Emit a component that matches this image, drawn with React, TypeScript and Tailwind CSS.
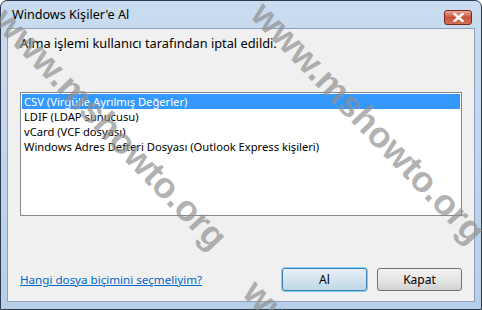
import React from 'react';

const items = [
  'CSV (Virgülle Ayrılmış Değerler)',
  'LDIF (LDAP sunucusu)',
  'vCard (VCF dosyası)',
  'Windows Adres Defteri Dosyası (Outlook Express kişileri)',
];

function Watermark({ className }: { className: string }) {
  return (
    <span
      className={`absolute whitespace-nowrap origin-top-left rotate-[46deg] font-bold text-[36px] leading-[40px] text-[#8f8f8f]/70 pointer-events-none ${className}`}
      style={{ fontFamily: '"Liberation Sans", Arial, sans-serif' }}
    >
      www.mshowto.org
    </span>
  );
}

export default function App() {
  return (
    <div
      className="relative w-[482px] h-[310px] overflow-hidden bg-white text-[12px] text-black"
      style={{ fontFamily: '"Noto Sans", "Open Sans", sans-serif' }}
    >
      <div className="flex flex-col w-full h-full border border-[#2d3b4d] rounded-t-[7px] bg-gradient-to-b from-[#c9dcf0] to-[#b6cfe9]">
        {/* title bar */}
        <div className="flex items-start justify-between h-[27px] pl-[11px] pr-[9px]">
          <span className="pt-[5px] leading-[17px] text-[12.6px]">Windows Kişiler'e Al</span>
          <div className="mt-[9px] w-[28px] h-[15px] rounded-[3px] border border-[#7a2a1c] bg-gradient-to-b from-[#e9a99a] via-[#c9523b] to-[#d0705a] flex items-center justify-center">
            <svg width="11" height="9" viewBox="0 0 11 9">
              <path d="M1.5 1 L9.5 8 M9.5 1 L1.5 8" stroke="#ffffff" strokeWidth="2.4" strokeLinecap="square" />
            </svg>
          </div>
        </div>

        {/* client area */}
        <div className="flex-1 mx-[6px] mb-[7px] border border-[#8ea3bb] bg-[#f0f0f0] flex flex-col px-[12px]">
          <p className="pt-[7px] leading-[15px] text-[12.8px]">Alma işlemi kullanıcı tarafından iptal edildi.</p>

          <div className="mt-[41px] h-[124px] border border-[#828790] bg-white p-[1px] text-[11.2px]">
            {items.map((it, i) => (
              <div
                key={it}
                className={`h-[15px] leading-[15px] pl-[2px] ${i === 0 ? 'bg-[#3399ff] text-white' : ''}`}
              >
                {it}
              </div>
            ))}
          </div>

          <div className="flex-1" />

          <div className="flex items-center justify-between pb-[10px]">
            <a className="text-[#0066cc] underline leading-[15px] text-[11.6px] cursor-pointer">Hangi dosya biçimini seçmeliyim?</a>
            <div className="flex gap-[10px]">
              <button className="w-[85px] h-[23px] rounded-[3px] border border-[#3c7fb1] shadow-[0_0_0_1px_#7fd0f5] bg-gradient-to-b from-[#e8f0f5] via-[#d4e3ee] to-[#bfd7e6] leading-[15px]">
                Al
              </button>
              <button className="w-[85px] h-[23px] rounded-[3px] border border-[#707070] bg-gradient-to-b from-[#f3f3f3] via-[#e6e6e6] to-[#d2d2d2] leading-[15px]">
                Kapat
              </button>
            </div>
          </div>
        </div>
      </div>

      {/* watermark */}
      <Watermark className="left-[14px] top-[0px]" />
      <Watermark className="left-[272px] top-[-6px]" />
      <Watermark className="left-[264px] top-[272px]" />
    </div>
  );
}
